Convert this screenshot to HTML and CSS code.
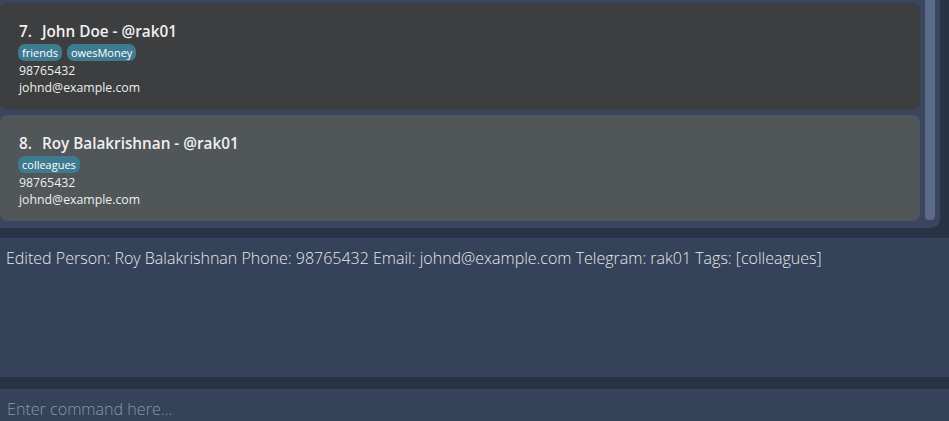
FILE: index.html
```html
<!DOCTYPE html>
<html>
<head>
<meta charset="utf-8">
<link rel="stylesheet" href="styles.css">
</head>
<body>
<div class="app">
  <div class="list-panel">
    <div class="cards">
      <div class="card card-even">
        <div class="name"><span class="num">7.</span>John Doe - @rak01</div>
        <div class="tags"><span class="tag">friends</span><span class="tag">owesMoney</span></div>
        <div class="line">98765432</div>
        <div class="line">johnd@example.com</div>
      </div>
      <div class="card card-odd">
        <div class="name"><span class="num">8.</span>Roy Balakrishnan - @rak01</div>
        <div class="tags"><span class="tag">colleagues</span></div>
        <div class="line">98765432</div>
        <div class="line">johnd@example.com</div>
      </div>
    </div>
    <div class="scroll-track"><div class="scroll-thumb"></div></div>
  </div>
  <div class="result">Edited Person: Roy Balakrishnan Phone: 98765432 Email: johnd@example.com Telegram: rak01 Tags: [colleagues]</div>
  <div class="command"><span class="placeholder">Enter command here...</span></div>
</div>
</body>
</html>
```
FILE: styles.css
```css
html, body {
  margin: 0;
  padding: 0;
  background: #283446;
  overflow: hidden;
}
.app {
  width: 949px;
  height: 421px;
  display: flex;
  flex-direction: column;
  font-family: "Open Sans", "Noto Sans", sans-serif;
  color: #ececec;
}
.list-panel {
  width: 940px;
  height: 228px;
  box-sizing: border-box;
  background: #3a4660;
  border-radius: 0 0 9px 0;
  display: flex;
  padding-top: 3px;
}
.cards {
  width: 920px;
  display: flex;
  flex-direction: column;
  gap: 5px;
}
.card {
  border-radius: 8px;
  box-sizing: border-box;
  padding: 18px 0 0 19px;
}
.card-even { background: #3c3e3f; height: 107px; }
.card-odd { background: #515658; height: 106px; }
.name {
  font-size: 15.3px;
  font-weight: 600;
  line-height: 20px;
  color: #f0f0f0;
}
.num { margin-right: 10px; }
.tags {
  display: flex;
  gap: 5px;
  margin-top: 3px;
  margin-left: -1px;
}
.tag {
  background: #3e7b91;
  color: #ffffff;
  font-size: 11px;
  line-height: 17px;
  padding: 0 4px;
  border-radius: 7px;
}
.line {
  font-size: 12.3px;
  line-height: 17px;
  color: #eeeeee;
}
.tags + .line { margin-top: 1px; }
.scroll-track {
  width: 20px;
  display: flex;
  justify-content: center;
  padding-left: 5px;
  box-sizing: border-box;
  margin-top: -3px;
}
.scroll-thumb {
  width: 10px;
  height: 220px;
  background: #5c6b87;
  border-radius: 0 0 4px 4px;
  margin-right: 5px;
}
.result {
  margin-top: 10px;
  height: 139px;
  box-sizing: border-box;
  background: #34425a;
  border-top: 1px solid #3b4962;
  padding: 8px 6px;
  font-size: 16px;
  line-height: 22px;
  font-weight: 300;
  color: #e8e8e8;
}
.command {
  margin-top: 12px;
  flex: 1;
  background: #34425a;
  padding: 9px 7px 0;
  font-size: 16.1px;
  font-weight: 300;
  line-height: 22px;
}
.placeholder { color: #8b96a6; }
```
